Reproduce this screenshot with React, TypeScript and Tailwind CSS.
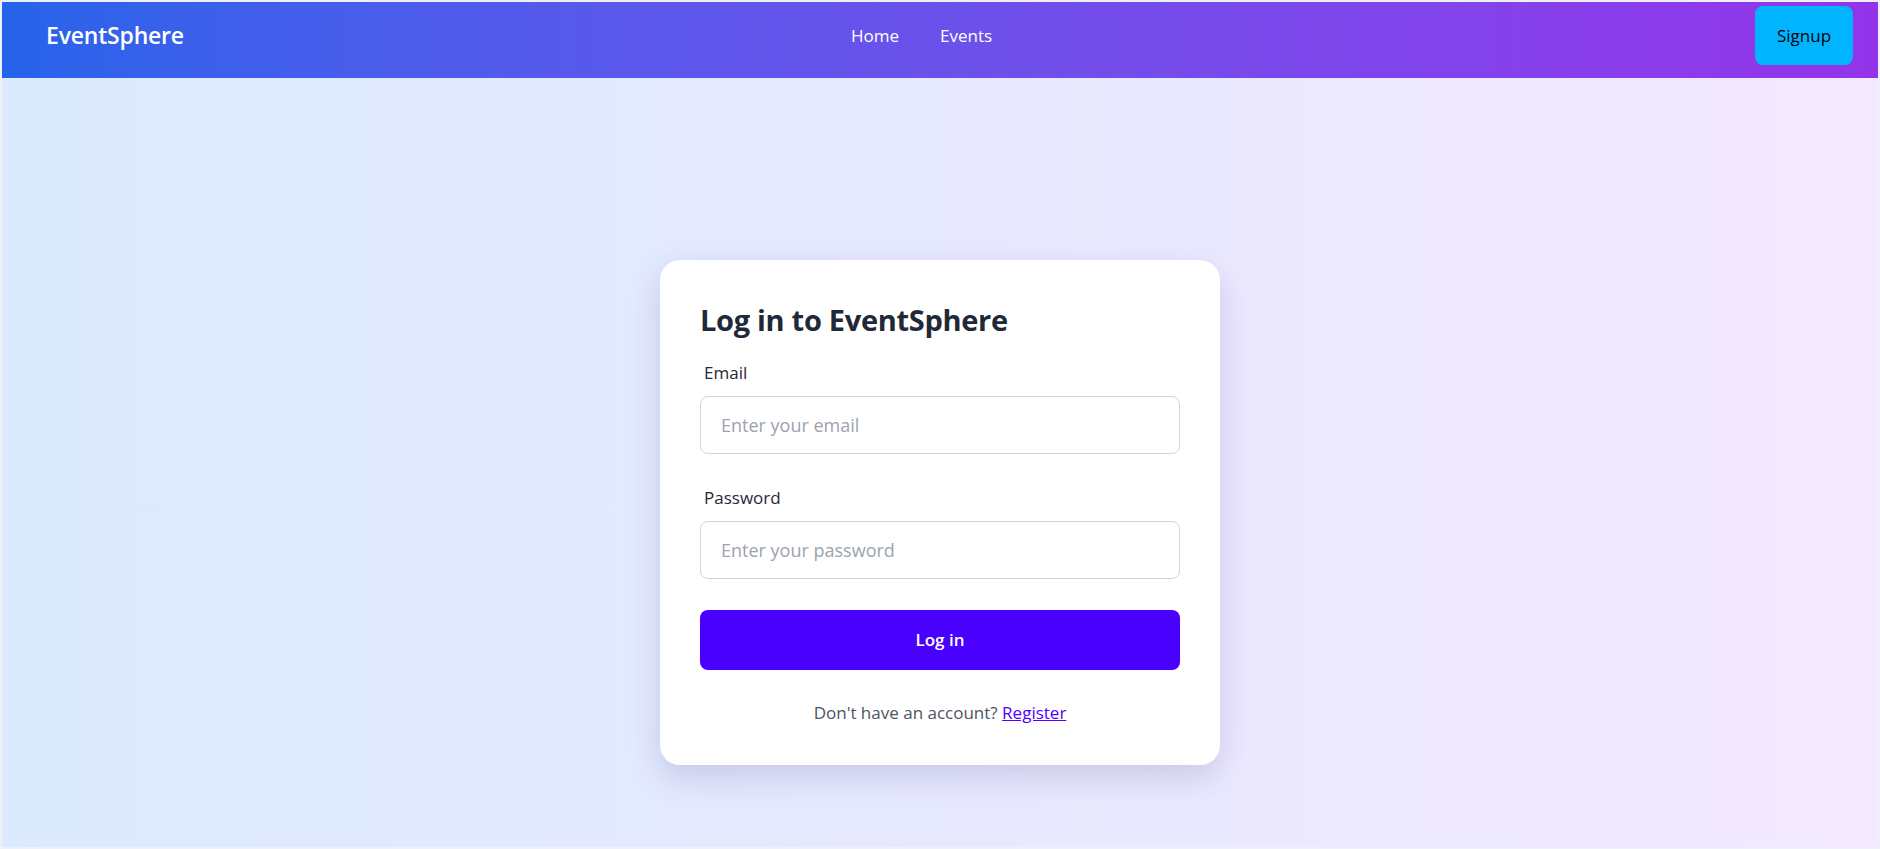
import { useState } from 'react';

export default function App() {
    const [email, setEmail] = useState('');
    const [password, setPassword] = useState('');

    return (
        <div
            className="h-[849px] w-full border-2 border-[#eef0f5] overflow-hidden flex flex-col"
            style={{ fontFamily: '"Open Sans", "Noto Sans", sans-serif' }}
        >
            <nav className="h-[76px] shrink-0 flex items-center pl-11 pr-[25px] pb-[9px] bg-linear-to-r from-[#2563eb] to-[#9333ea]">
                <div className="w-[805px] text-white text-[23px] font-semibold tracking-[-0.2px]">EventSphere</div>
                <div className="flex items-center gap-[41px] text-white text-[17px]">
                    <a href="#" className="leading-6">Home</a>
                    <a href="#" className="leading-6">Events</a>
                </div>
                <button className="ml-auto h-[59px] w-[98px] rounded-lg bg-[#00b4ff] text-black text-[17px]">
                    Signup
                </button>
            </nav>

            <main className="flex-1 flex justify-center pt-[182px] bg-linear-to-r from-[#dbeafe] to-[#f3e8ff]">
                <div className="w-[560px] h-fit bg-white rounded-[20px] p-10 shadow-[0_12px_32px_rgba(60,60,120,0.18)]">
                    <h1 className="text-[29px] leading-10 font-bold text-[#1f2937] tracking-[-0.3px]">Log in to EventSphere</h1>

                    <label className="block mt-[21px] ml-1 text-[17px] leading-6 text-[#1f2937]">Email</label>
                    <input
                        type="email"
                        value={email}
                        onChange={e => setEmail(e.target.value)}
                        placeholder="Enter your email"
                        className="mt-[11px] w-full h-[58px] px-5 rounded-lg border border-[#d1d5db] text-[18px] placeholder:text-[#9ca3af] outline-none"
                    />

                    <label className="block mt-[32px] ml-1 text-[17px] leading-6 text-[#1f2937]">Password</label>
                    <input
                        type="password"
                        value={password}
                        onChange={e => setPassword(e.target.value)}
                        placeholder="Enter your password"
                        className="mt-[11px] w-full h-[58px] px-5 rounded-lg border border-[#d1d5db] text-[18px] placeholder:text-[#9ca3af] outline-none"
                    />

                    <button className="mt-[31px] w-full h-[60px] rounded-lg bg-[#4a00ff] text-white text-[17px] font-semibold">
                        Log in
                    </button>

                    <p className="mt-[31px] text-center text-[17px] leading-6 text-[#4b5563]">
                        Don't have an account?{' '}
                        <a href="#" className="text-[#4f00ff] underline">Register</a>
                    </p>
                </div>
            </main>
        </div>
    );
}
